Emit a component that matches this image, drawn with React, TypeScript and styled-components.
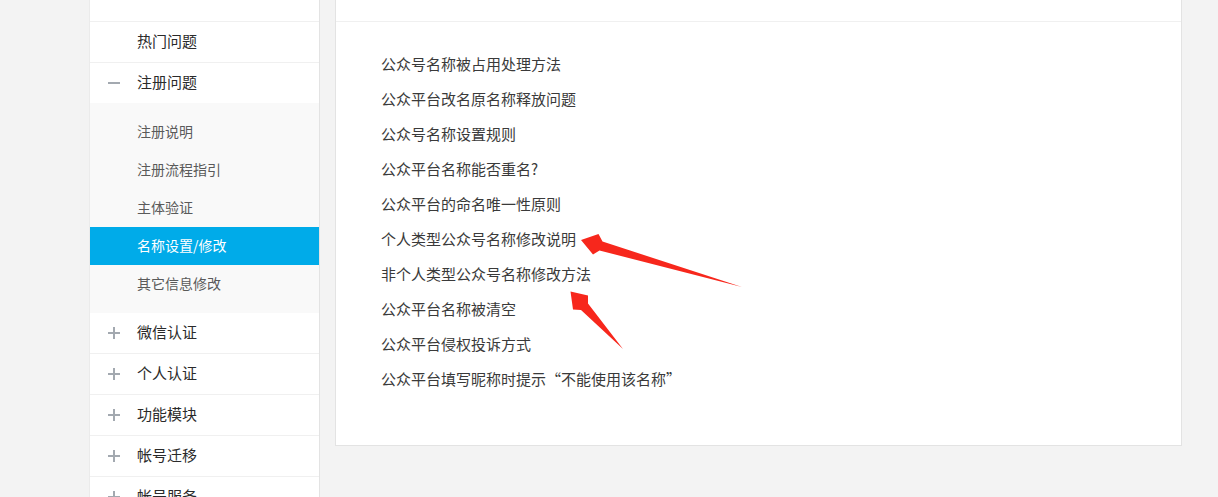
import React from 'react';
import styled, { createGlobalStyle } from 'styled-components';

const GlobalStyle = createGlobalStyle`
  html, body {
    margin: 0;
    padding: 0;
    background: #f3f3f3;
    font-family: "Microsoft YaHei", "Noto Sans CJK SC", "Noto Sans", sans-serif;
    font-size: 14px;
  }
`;

const Page = styled.div`
  position: relative;
  display: flex;
  align-items: flex-start;
  gap: 15px;
  padding-left: 89px;
  width: 1218px;
  height: 497px;
  overflow: hidden;
  box-sizing: border-box;
`;

const Sidebar = styled.nav`
  width: 231px;
  flex-shrink: 0;
  background: #fff;
  border-left: 1px solid #ebebeb;
  border-right: 1px solid #e3e3e3;
  box-sizing: border-box;
`;

const TopCell = styled.div`
  height: 21px;
  border-bottom: 1px solid #f0f0f0;
`;

const MenuRow = styled.div<{ $last?: boolean }>`
  display: flex;
  align-items: center;
  height: 40px;
  box-sizing: content-box;
  padding-left: 18px;
  color: #2a2a2a;
  font-size: 15px;
  border-bottom: ${p => (p.$last ? 'none' : '1px solid #f0f0f0')};
`;

const RowLabel = styled.span`
  position: relative;
  top: -1.5px;
`;

const IconSlot = styled.span`
  display: inline-flex;
  width: 12px;
  height: 12px;
  margin-right: 17px;
`;

const SubList = styled.div`
  background: #f9f9f9;
  padding: 10px 0;
`;

const SubItem = styled.div<{ $active?: boolean }>`
  height: 38px;
  line-height: 36px;
  padding-left: 47px;
  color: ${p => (p.$active ? '#fff' : '#5a5a5a')};
  background: ${p => (p.$active ? '#00abe9' : 'transparent')};
`;

const Panel = styled.section`
  width: 847px;
  flex-shrink: 0;
  background: #fff;
  border: 1px solid #e3e3e3;
  border-top: none;
  box-sizing: border-box;
`;

const PanelHead = styled.div`
  height: 21px;
  border-bottom: 1px solid #f0f0f0;
`;

const LinkList = styled.ul`
  list-style: none;
  margin: 0;
  padding: 24px 45px 49px;
`;

const LinkItem = styled.li`
  height: 35px;
  line-height: 35px;
  font-size: 15px;
  color: #3a3a3a;
`;

const Overlay = styled.svg`
  position: absolute;
  left: 0;
  top: 0;
  pointer-events: none;
`;

const Plus = () => (
  <svg width="12" height="12" viewBox="0 0 12 12">
    <rect x="0" y="5" width="12" height="2" fill="#a3a9b0" />
    <rect x="5" y="0" width="2" height="12" fill="#a3a9b0" />
  </svg>
);

const Minus = () => (
  <svg width="12" height="12" viewBox="0 0 12 12">
    <rect x="0" y="5" width="12" height="2" fill="#a3a9b0" />
  </svg>
);

const subItems = ['注册说明', '注册流程指引', '主体验证', '名称设置/修改', '其它信息修改'];
const moreGroups = ['微信认证', '个人认证', '功能模块', '帐号迁移', '帐号服务'];

const links = [
  '公众号名称被占用处理方法',
  '公众平台改名原名称释放问题',
  '公众号名称设置规则',
  '公众平台名称能否重名?',
  '公众平台的命名唯一性原则',
  '个人类型公众号名称修改说明',
  '非个人类型公众号名称修改方法',
  '公众平台名称被清空',
  '公众平台侵权投诉方式',
  '公众平台填写昵称时提示“不能使用该名称”',
];

export default function App() {
  return (
    <>
      <GlobalStyle />
      <Page lang="zh-CN">
        <Sidebar>
          <TopCell />
          <MenuRow>
            <IconSlot />
            <RowLabel>热门问题</RowLabel>
          </MenuRow>
          <MenuRow $last>
            <IconSlot>
              <Minus />
            </IconSlot>
            <RowLabel>注册问题</RowLabel>
          </MenuRow>
          <SubList>
            {subItems.map(s => (
              <SubItem key={s} $active={s === '名称设置/修改'}>
                {s}
              </SubItem>
            ))}
          </SubList>
          {moreGroups.map(g => (
            <MenuRow key={g}>
              <IconSlot>
                <Plus />
              </IconSlot>
              <RowLabel>{g}</RowLabel>
            </MenuRow>
          ))}
        </Sidebar>
        <Panel>
          <PanelHead />
          <LinkList>
            {links.map(l => (
              <LinkItem key={l}>{l}</LinkItem>
            ))}
          </LinkList>
        </Panel>
        {/* red annotation arrows drawn over the list */}
        <Overlay width="1218" height="497" viewBox="0 0 1218 497">
          <polygon
            fill="#f7271c"
            points="581,240 598.5,234 602.5,241.5 742,287 599.5,250.5 593,254.5"
          />
          <polygon
            fill="#f7271c"
            points="570.5,291.5 588,295.5 588,303.5 623,349 581,310 573,309.5"
          />
        </Overlay>
      </Page>
    </>
  );
}
